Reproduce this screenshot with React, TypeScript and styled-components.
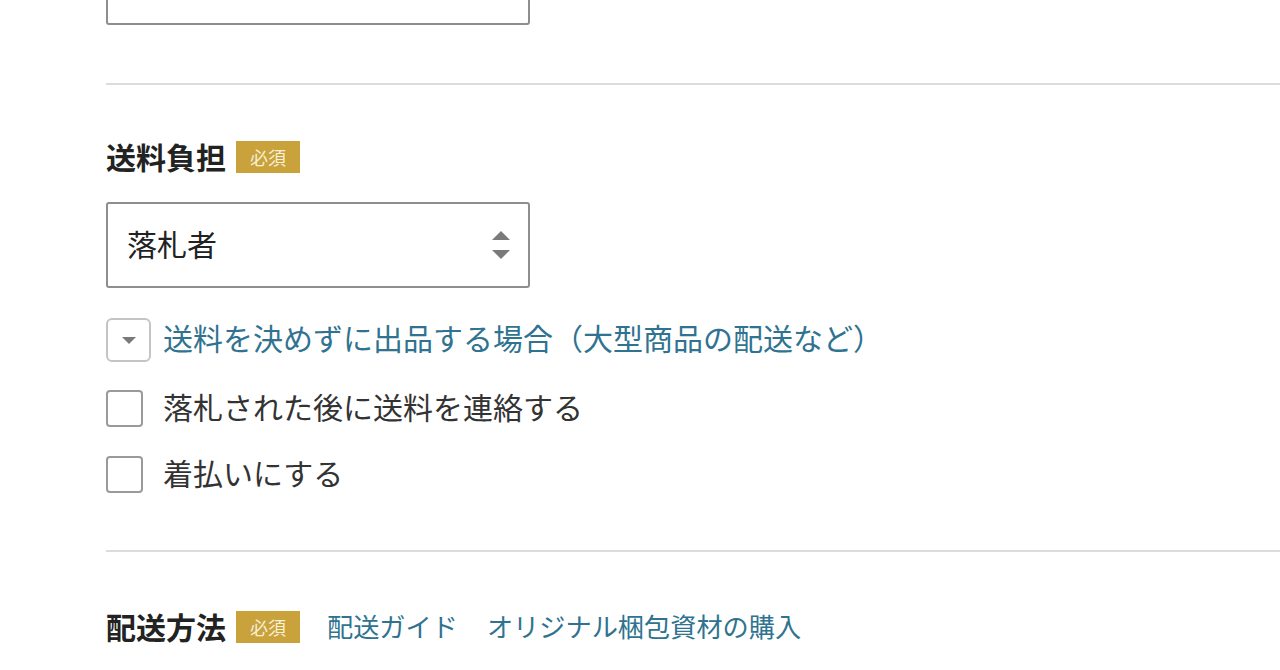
import React from 'react';
import styled, { createGlobalStyle } from 'styled-components';

const GlobalStyle = createGlobalStyle`
  html, body {
    margin: 0;
    padding: 0;
    background: #ffffff;
    overflow: hidden;
  }
  body {
    font-family: "Noto Sans CJK JP", "Noto Sans", sans-serif;
    color: #333;
  }
`;

const Page = styled.div`
  width: 1280px;
  height: 670px;
  overflow: hidden;
  padding-left: 106px;
  box-sizing: border-box;
  display: flex;
  flex-direction: column;
`;

const SelectBox = styled.div<{ $offset?: number }>`
  width: 424px;
  height: 86px;
  box-sizing: border-box;
  border: 2px solid #8e8e8e;
  border-radius: 3px;
  margin-top: ${p => p.$offset ?? 0}px;
  display: flex;
  align-items: center;
  justify-content: space-between;
  padding: 0 18px 0 19px;
  font-size: 30px;
  color: #222;
`;

const SelectValue = styled.span`
  margin-top: -4px;
`;

const Arrows = styled.div`
  display: flex;
  flex-direction: column;
  gap: 10px;
`;

const Divider = styled.hr<{ $top: number }>`
  margin: ${p => p.$top}px 0 0 0;
  border: 0;
  height: 2px;
  background: #dcdcdc;
  width: 100%;
`;

const HeadingRow = styled.div<{ $top: number }>`
  margin-top: ${p => p.$top}px;
  height: 32px;
  display: flex;
  align-items: center;
`;

const Heading = styled.span`
  font-size: 30px;
  font-weight: 700;
  color: #222;
  line-height: 32px;
  margin-top: -2px;
`;

const Badge = styled.span`
  margin-left: 10px;
  width: 64px;
  height: 32px;
  background: #c9a23b;
  color: #f7efd6;
  font-size: 18px;
  display: flex;
  align-items: center;
  justify-content: center;
`;

const HeadLink = styled.a<{ $gap: number }>`
  margin-left: ${p => p.$gap}px;
  margin-top: -2px;
  font-size: 26.2px;
  color: #2f7390;
  text-decoration: none;
  line-height: 32px;
`;

const ToggleRow = styled.div`
  margin-top: 30px;
  height: 44px;
  display: flex;
  align-items: center;
  gap: 12px;
`;

const ToggleButton = styled.span`
  width: 45px;
  height: 44px;
  box-sizing: border-box;
  border: 2px solid #c4c4c4;
  border-radius: 6px;
  display: flex;
  align-items: center;
  justify-content: center;
`;

const ToggleLink = styled.a`
  font-size: 30px;
  color: #2f7390;
  text-decoration: none;
  line-height: 44px;
  margin-top: -6px;
`;

const CheckRow = styled.label<{ $top: number }>`
  margin-top: ${p => p.$top}px;
  height: 37px;
  display: flex;
  align-items: center;
  gap: 20px;
  font-size: 30px;
  color: #333;
  line-height: 37px;
`;

const CheckText = styled.span`
  margin-top: -4px;
`;

const CheckBox = styled.span`
  width: 37px;
  height: 37px;
  box-sizing: border-box;
  border: 2px solid #9a9a9a;
  border-radius: 4px;
  flex: none;
`;

const Triangle = ({ up }: { up?: boolean }) => (
  <svg width="18" height="9" viewBox="0 0 18 9">
    <path d={up ? 'M0 9 L9 0 L18 9 Z' : 'M0 0 L18 0 L9 9 Z'} fill="#7a7a7a" />
  </svg>
);

export default function App() {
  return (
    <>
      <GlobalStyle />
      <Page>
        <SelectBox $offset={-61}>
          <span />
        </SelectBox>
        <Divider $top={58} />

        <HeadingRow $top={56}>
          <Heading>送料負担</Heading>
          <Badge>必須</Badge>
        </HeadingRow>

        <SelectBox $offset={29}>
          <SelectValue>落札者</SelectValue>
          <Arrows>
            <Triangle up />
            <Triangle />
          </Arrows>
        </SelectBox>

        <ToggleRow>
          <ToggleButton>
            <svg width="14" height="7" viewBox="0 0 14 7">
              <path d="M0 0 L14 0 L7 7 Z" fill="#7a7a7a" />
            </svg>
          </ToggleButton>
          <ToggleLink href="#">送料を決めずに出品する場合（大型商品の配送など）</ToggleLink>
        </ToggleRow>

        <CheckRow $top={28}>
          <CheckBox />
          <CheckText>落札された後に送料を連絡する</CheckText>
        </CheckRow>
        <CheckRow $top={29}>
          <CheckBox />
          <CheckText>着払いにする</CheckText>
        </CheckRow>

        <Divider $top={57} />

        <HeadingRow $top={59}>
          <Heading>配送方法</Heading>
          <Badge>必須</Badge>
          <HeadLink href="#" $gap={27}>配送ガイド</HeadLink>
          <HeadLink href="#" $gap={29}>オリジナル梱包資材の購入</HeadLink>
        </HeadingRow>
      </Page>
    </>
  );
}
